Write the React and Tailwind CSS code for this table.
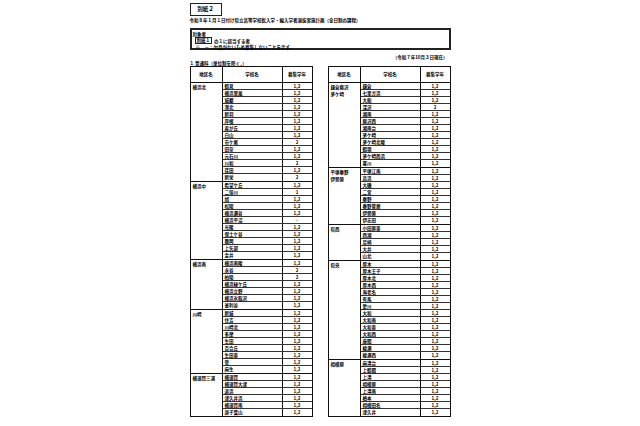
import React from 'react';

const leftGroups = [
  {
    area: '横浜北',
    schools: [
      ['鶴見', '1,2'], ['横浜翠嵐', '1,2'], ['城郷', '1,2'], ['港北', '1,2'], ['新羽', '1,2'],
      ['岸根', '1,2'], ['霧が丘', '1,2'], ['白山', '1,2'], ['市ケ尾', '2'], ['田奈', '1,2'],
      ['元石川', '1,2'], ['川和', '2'], ['荏田', '1,2'], ['新栄', '2'],
    ],
  },
  {
    area: '横浜中',
    schools: [
      ['希望ケ丘', '1,2'], ['二俣川', '1'], ['旭', '1,2'], ['松陽', '1,2'], ['横浜瀬谷', '1,2'],
      ['横浜平沼', '-'], ['光陵', '1,2'], ['保土ケ谷', '1,2'], ['舞岡', '1,2'], ['上矢部', '1,2'],
      ['金井', '1,2'],
    ],
  },
  {
    area: '横浜南',
    schools: [
      ['横浜南陵', '1,2'], ['永谷', '2'], ['柏陽', '2'], ['横浜緑ケ丘', '1,2'], ['横浜立野', '1,2'],
      ['横浜氷取沢', '1,2'], ['釜利谷', '1,2'],
    ],
  },
  {
    area: '川崎',
    schools: [
      ['新城', '1,2'], ['住吉', '1,2'], ['川崎北', '1,2'], ['多摩', '1,2'], ['生田', '1,2'],
      ['百合丘', '1,2'], ['生田東', '1,2'], ['菅', '1,2'], ['麻生', '1,2'],
    ],
  },
  {
    area: '横須賀三浦',
    schools: [
      ['横須賀', '1,2'], ['横須賀大津', '1,2'], ['追浜', '1,2'], ['津久井浜', '1,2'],
      ['横須賀南', '1,2'], ['逗子葉山', '1,2'],
    ],
  },
];

const rightGroups = [
  {
    area: ['鎌倉藤沢', '茅ケ崎'],
    schools: [
      ['鎌倉', '1,2'], ['七里ガ浜', '1,2'], ['大船', '1,2'], ['深沢', '2'], ['湘南', '1,2'],
      ['藤沢西', '1,2'], ['湘南台', '1,2'], ['茅ケ崎', '1,2'], ['茅ケ崎北陵', '1,2'], ['鶴嶺', '1,2'],
      ['茅ケ崎西浜', '1,2'], ['寒川', '1,2'],
    ],
  },
  {
    area: ['平塚秦野', '伊勢原'],
    schools: [
      ['平塚江南', '1,2'], ['高浜', '1,2'], ['大磯', '1,2'], ['二宮', '1,2'], ['秦野', '1,2'],
      ['秦野曽屋', '1,2'], ['伊勢原', '1,2'], ['伊志田', '1,2'],
    ],
  },
  {
    area: ['県西'],
    schools: [['小田原東', '1,2'], ['西湘', '1,2'], ['足柄', '1,2'], ['大井', '1,2'], ['山北', '1,2']],
  },
  {
    area: ['県央'],
    schools: [
      ['厚木', '1,2'], ['厚木王子', '1,2'], ['厚木北', '1,2'], ['厚木西', '1,2'], ['海老名', '1,2'],
      ['有馬', '1,2'], ['愛川', '1,2'], ['大和', '1,2'], ['大和南', '1,2'], ['大和東', '1,2'],
      ['大和西', '1,2'], ['座間', '1,2'], ['綾瀬', '1,2'], ['綾瀬西', '1,2'],
    ],
  },
  {
    area: ['相模原'],
    schools: [
      ['麻溝台', '1,2'], ['上鶴間', '1,2'], ['上溝', '1,2'], ['相模原', '1,2'], ['上溝南', '1,2'],
      ['橋本', '1,2'], ['相模田名', '1,2'], ['津久井', '1,2'],
    ],
  },
];

const SchoolTable = ({ groups }) => (
  <div className="w-[123px] border border-[#111]">
    {/* header */}
    <div className="flex h-[16px] border-b border-[#111] text-[4.5px] font-bold">
      <div className="w-[32px] flex items-center justify-center border-r border-[#111]">地区名</div>
      <div className="w-[60px] flex items-center justify-center border-r border-[#111]">学校名</div>
      <div className="flex-1 flex items-center justify-center">募集学年</div>
    </div>
    {groups.map((g, gi) => (
      <div key={gi} className="flex border-b border-[#111] last:border-b-0">
        <div className="w-[32px] shrink-0 border-r border-[#111] pl-[2px] pt-[1px] text-[4.5px] leading-[7px] font-bold">
          {[].concat(g.area).map((a) => (
            <div key={a}>{a}</div>
          ))}
        </div>
        <div className="flex-1 flex flex-col">
          {g.schools.map(([name, grade], si) => (
            <div key={si} className="flex h-[7px] border-b border-[#333] last:border-b-0 text-[4.5px] leading-[6px] font-bold">
              <div className="w-[60px] border-r border-[#111] pl-[2px] whitespace-nowrap">{name}</div>
              <div className="flex-1 text-center">{grade}</div>
            </div>
          ))}
        </div>
      </div>
    ))}
  </div>
);

export default function App() {
  return (
    <div className="min-h-screen bg-white text-black font-bold font-['Noto_Sans_CJK_JP',sans-serif]">
      <div className="mx-auto w-[261px] pt-[3px]">
        <div className="w-[32px] h-[13px] border border-[#222] flex items-center justify-center text-[5.5px]">
          別紙２
        </div>
        <p className="mt-[1px] text-[4.5px] leading-[7px] whitespace-nowrap">
          令和８年１月１日付け県立高等学校転入学・編入学者選抜実施計画（全日制の課程）
        </p>
        <div className="mt-[4px] h-[22px] border-2 border-[#222] pl-[1px] pt-[1px] text-[4.5px] leading-[6px]">
          <div>対象者</div>
          <div className="flex items-center gap-[2px] pl-[2px]">
            <span className="border border-[#222] px-[1px] leading-[5px]">別紙１</span>
            <span>の１に該当する者</span>
          </div>
          <div className="pl-[3px]">※　－：欠員がないため募集しないことを示す。</div>
        </div>
        <p className="mt-[4px] pr-[3px] text-right text-[4.5px] leading-[6px]">（令和７年10月３日現在）</p>
        <p className="text-[4.5px] leading-[6px]">１ 普通科（単位制を除く。）</p>
        <div className="flex justify-between">
          <SchoolTable groups={leftGroups} />
          <SchoolTable groups={rightGroups} />
        </div>
      </div>
    </div>
  );
}
